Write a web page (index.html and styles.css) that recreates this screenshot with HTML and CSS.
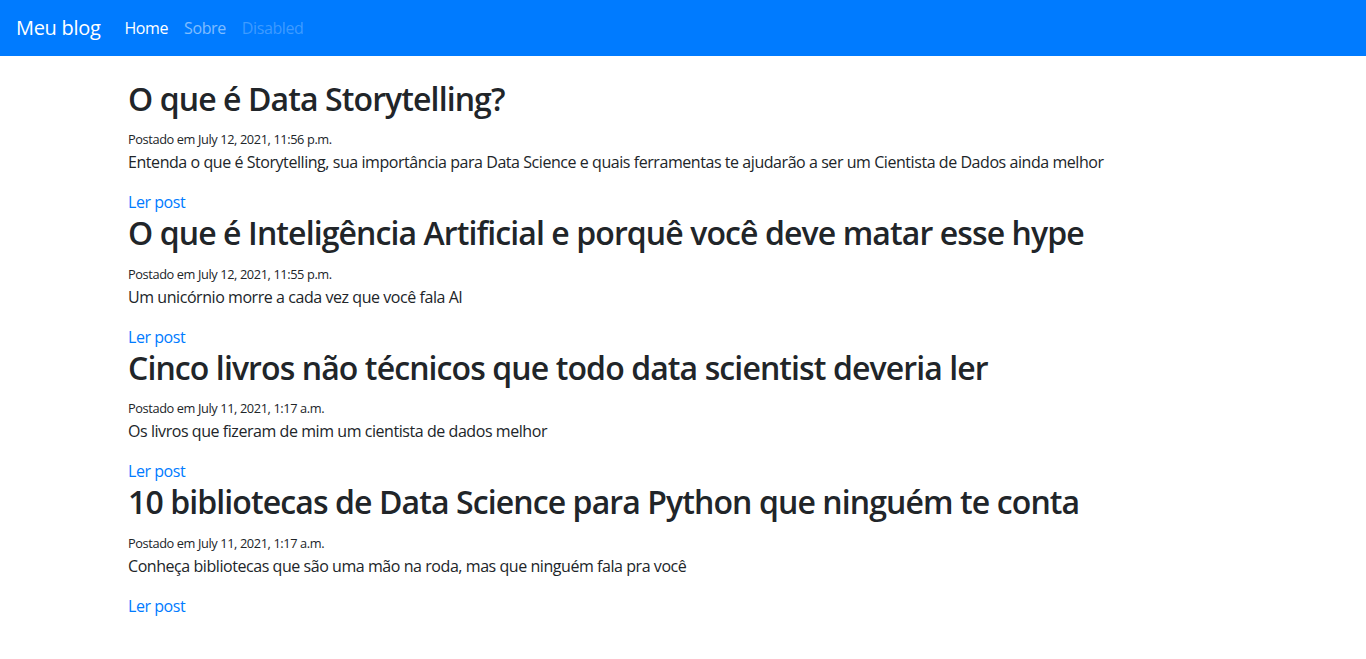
FILE: index.html
```html
<!DOCTYPE html>
<html lang="pt-br">
<head>
<meta charset="utf-8">
<title>Meu blog</title>
<link rel="stylesheet" href="styles.css">
</head>
<body>
<nav class="navbar">
  <a class="brand" href="#">Meu blog</a>
  <ul class="nav">
    <li><a class="nav-link active" href="#">Home</a></li>
    <li><a class="nav-link" href="#">Sobre</a></li>
    <li><a class="nav-link disabled" href="#">Disabled</a></li>
  </ul>
</nav>
<main class="container">
  <article class="post">
    <h2 class="post-title">O que é Data Storytelling?</h2>
    <div class="meta"><small>Postado em July 12, 2021, 11:56 p.m.</small></div>
    <p class="summary">Entenda o que é Storytelling, sua importância para Data Science e quais ferramentas te ajudarão a ser um Cientista de Dados ainda melhor</p>
    <a class="read" href="#">Ler post</a>
  </article>
  <article class="post">
    <h2 class="post-title">O que é Inteligência Artificial e porquê você deve matar esse hype</h2>
    <div class="meta"><small>Postado em July 12, 2021, 11:55 p.m.</small></div>
    <p class="summary">Um unicórnio morre a cada vez que você fala AI</p>
    <a class="read" href="#">Ler post</a>
  </article>
  <article class="post">
    <h2 class="post-title">Cinco livros não técnicos que todo data scientist deveria ler</h2>
    <div class="meta"><small>Postado em July 11, 2021, 1:17 a.m.</small></div>
    <p class="summary">Os livros que fizeram de mim um cientista de dados melhor</p>
    <a class="read" href="#">Ler post</a>
  </article>
  <article class="post">
    <h2 class="post-title">10 bibliotecas de Data Science para Python que ninguém te conta</h2>
    <div class="meta"><small>Postado em July 11, 2021, 1:17 a.m.</small></div>
    <p class="summary">Conheça bibliotecas que são uma mão na roda, mas que ninguém fala pra você</p>
    <a class="read" href="#">Ler post</a>
  </article>
</main>
</body>
</html>
```
FILE: styles.css
```css
* { box-sizing: border-box; }
body {
  margin: 0;
  font-family: "Open Sans", "Noto Sans", sans-serif;
  font-size: 16px;
  line-height: 1.5;
  letter-spacing: -0.44px;
  color: #212529;
  background: #fff;
}
a { text-decoration: none; }
.navbar {
  display: flex;
  align-items: center;
  height: 56px;
  padding: 8px 16px;
  background: #007bff;
}
.brand {
  color: #fff;
  font-size: 20px;
  line-height: 30px;
  letter-spacing: -0.3px;
  margin-right: 16px;
}
.nav {
  display: flex;
  list-style: none;
  margin: 0;
  padding: 0;
}
.nav-link {
  display: block;
  padding: 8px;
  letter-spacing: -0.4px;
  color: rgba(255,255,255,.5);
}
.nav-link.active { color: #fff; }
.nav-link.disabled { color: rgba(255,255,255,.25); }
.container {
  max-width: 1140px;
  margin: 24px auto 0;
  padding: 0 15px;
}
.post-title {
  margin: 0 0 8px;
  font-size: 32px;
  font-weight: 600;
  line-height: 1.2;
  letter-spacing: -0.9px;
}
.meta small { font-size: 12.8px; letter-spacing: -0.4px; }
.summary { margin: 0 0 16px; }
.read { color: #007bff; }
```
